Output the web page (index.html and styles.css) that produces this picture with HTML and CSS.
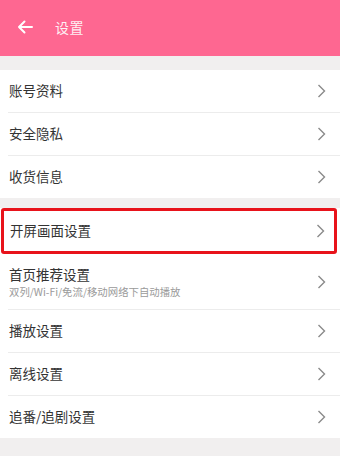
FILE: index.html
```html
<!DOCTYPE html>
<html lang="zh">
<head>
<meta charset="utf-8">
<link rel="stylesheet" href="styles.css">
</head>
<body>
<div class="header">
  <svg class="back" width="16" height="14" viewBox="0 0 16 14"><path d="M15 7H2M7.5 1.5L2 7l5.5 5.5" fill="none" stroke="#fff" stroke-width="2" stroke-linecap="round" stroke-linejoin="round"/></svg>
  <span class="title">设置</span>
</div>
<div class="gap top"></div>
<div class="group">
  <div class="item"><span class="label">账号资料</span><svg class="chev" width="9" height="14" viewBox="0 0 9 14"><path d="M1.5 1l6 6-6 6" fill="none" stroke="#8a8a8a" stroke-width="1.4"/></svg></div>
  <div class="item"><span class="label">安全隐私</span><svg class="chev" width="9" height="14" viewBox="0 0 9 14"><path d="M1.5 1l6 6-6 6" fill="none" stroke="#8a8a8a" stroke-width="1.4"/></svg></div>
  <div class="item last"><span class="label">收货信息</span><svg class="chev" width="9" height="14" viewBox="0 0 9 14"><path d="M1.5 1l6 6-6 6" fill="none" stroke="#8a8a8a" stroke-width="1.4"/></svg></div>
</div>
<div class="gap mid"></div>
<div class="group">
  <div class="item hl"><span class="label">开屏画面设置</span><svg class="chev" width="9" height="14" viewBox="0 0 9 14"><path d="M1.5 1l6 6-6 6" fill="none" stroke="#8a8a8a" stroke-width="1.4"/></svg></div>
  <div class="item tall"><div class="texts"><span class="label">首页推荐设置</span><span class="sub">双列/Wi-Fi/免流/移动网络下自动播放</span></div><svg class="chev" width="9" height="14" viewBox="0 0 9 14"><path d="M1.5 1l6 6-6 6" fill="none" stroke="#8a8a8a" stroke-width="1.4"/></svg></div>
  <div class="item"><span class="label">播放设置</span><svg class="chev" width="9" height="14" viewBox="0 0 9 14"><path d="M1.5 1l6 6-6 6" fill="none" stroke="#8a8a8a" stroke-width="1.4"/></svg></div>
  <div class="item"><span class="label">离线设置</span><svg class="chev" width="9" height="14" viewBox="0 0 9 14"><path d="M1.5 1l6 6-6 6" fill="none" stroke="#8a8a8a" stroke-width="1.4"/></svg></div>
  <div class="item last"><span class="label">追番/追剧设置</span><svg class="chev" width="9" height="14" viewBox="0 0 9 14"><path d="M1.5 1l6 6-6 6" fill="none" stroke="#8a8a8a" stroke-width="1.4"/></svg></div>
</div>
</body>
</html>
```
FILE: styles.css
```css
html, body {
  margin: 0;
  padding: 0;
}
body {
  width: 340px;
  height: 456px;
  overflow: hidden;
  background: #f1efef;
  font-family: "Noto Sans CJK SC", "Noto Sans", sans-serif;
  color: #333;
}
.header {
  height: 56px;
  background: #fe6791;
  display: flex;
  align-items: center;
  padding-left: 17px;
  box-sizing: border-box;
  padding-bottom: 2px;
}
.back {
  display: block;
}
.title {
  margin-left: 22px;
  color: rgba(255, 255, 255, 0.92);
  font-size: 14px;
  letter-spacing: 0.5px;
}
.gap.top {
  height: 14px;
}
.gap.mid {
  height: 10px;
}
.group {
  background: #fff;
}
.item {
  height: 42px;
  margin-left: 8px;
  padding-left: 1px;
  padding-right: 14px;
  display: flex;
  align-items: center;
  justify-content: space-between;
  border-bottom: 1px solid #ececec;
}
.item.last {
  border-bottom: none;
}
.label {
  font-size: 13.5px;
  line-height: 1;
  color: #333;
}
.chev {
  display: block;
  flex: none;
}
.item.hl {
  height: 46px;
  box-sizing: border-box;
  margin: 0 3px 0 1px;
  padding-left: 6px;
  padding-right: 9px;
  border: 3px solid #e8131b;
  border-radius: 3px;
}
.item.tall {
  height: 55px;
}
.texts {
  display: flex;
  flex-direction: column;
  gap: 5px;
  padding-top: 2px;
}
.sub {
  font-size: 10.4px;
  line-height: 1;
  color: #9a9a9a;
}
```
